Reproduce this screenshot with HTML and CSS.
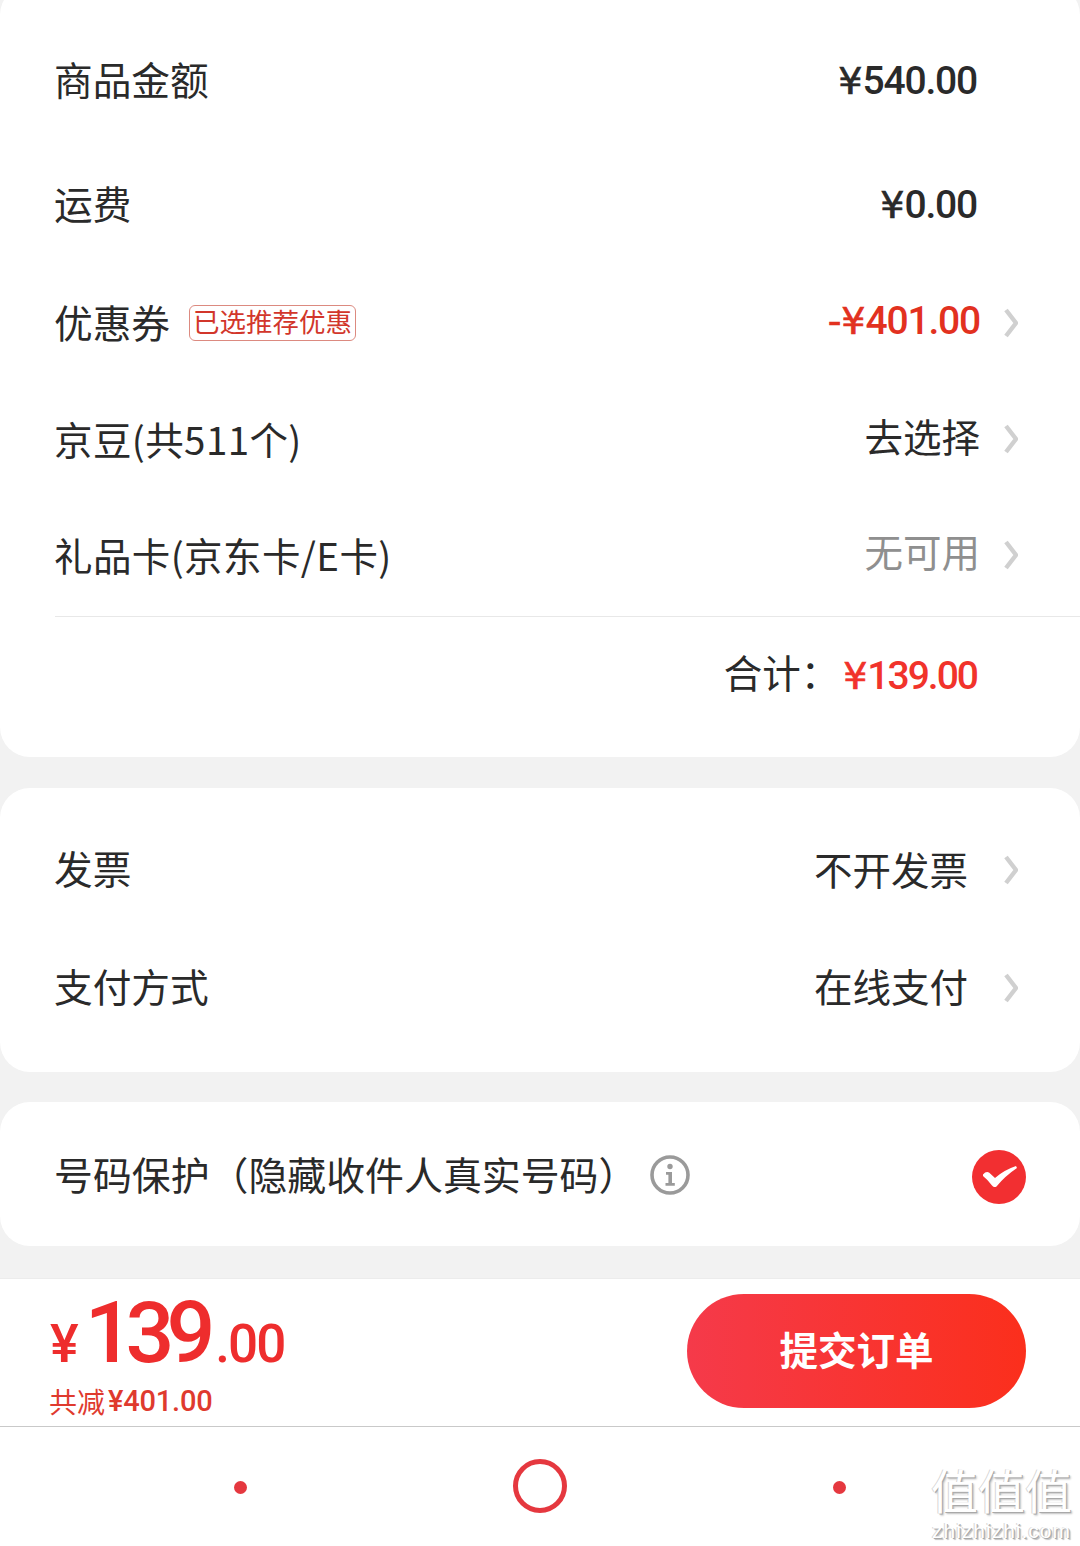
FILE: index.html
```html
<!DOCTYPE html>
<html lang="zh-CN">
<head>
<meta charset="utf-8">
<title>订单</title>
<link rel="stylesheet" href="styles.css">
</head>
<body>
<main class="page">
  <section class="card card-price">
    <div class="row row-first"><span class="label">商品金额</span><span class="num end-pad"><span class="cur">¥</span>540.00</span></div>
    <div class="row row-second"><span class="label">运费</span><span class="num end-pad"><span class="cur">¥</span>0.00</span></div>
    <div class="row"><span class="label label-mid">优惠券</span><span class="tag">已选推荐优惠</span><span class="num red-dark push"><span class="cur">-¥</span>401.00</span><svg class="chev" viewBox="0 0 14 30"><path d="M2 2 L12 15 L2 28"/></svg></div>
    <div class="row row-low"><span class="label label-low">京豆(共511个)</span><span class="value value-a push">去选择</span><svg class="chev" viewBox="0 0 14 30"><path d="M2 2 L12 15 L2 28"/></svg></div>
    <div class="row row-low"><span class="label label-low">礼品卡(京东卡/E卡)</span><span class="value value-b muted push">无可用</span><svg class="chev" viewBox="0 0 14 30"><path d="M2 2 L12 15 L2 28"/></svg></div>
    <div class="divider"></div>
    <div class="total"><span class="value value-c">合计：</span><span class="num red"><span class="cur">¥</span>139.00</span></div>
  </section>

  <section class="card card-pay">
    <div class="row row-pay"><span class="label">发票</span><span class="value value-a push">不开发票</span><svg class="chev chev-wide" viewBox="0 0 14 30"><path d="M2 2 L12 15 L2 28"/></svg></div>
    <div class="row row-pay"><span class="label">支付方式</span><span class="value value-b push">在线支付</span><svg class="chev chev-wide" viewBox="0 0 14 30"><path d="M2 2 L12 15 L2 28"/></svg></div>
  </section>

  <section class="card card-protect">
    <span class="label label-long">号码保护（隐藏收件人真实号码）</span>
    <svg class="info" viewBox="0 0 40 40"><circle cx="20" cy="20" r="18" fill="none" stroke="#9a9a9a" stroke-width="3.6"/><circle cx="20" cy="11.5" r="2.7" fill="#9a9a9a"/><path d="M16 17 H22 V28 H24.800 V30.800 H15.500 V28 H18.400 V19.800 H16 Z" fill="#9a9a9a"/></svg>
    <svg class="check" viewBox="0 0 54 54"><circle cx="27" cy="27" r="27" fill="#f22f31"/><path d="M11 24.500 Q14 21 17 22.500 L23 28 Q32 20 44 16 L45 18 Q33 26 24.500 36.500 Q22 38 20 35.500 Q16 30 11 26 Z" fill="#fff"/></svg>
  </section>

  <section class="bar">
    <div class="sum">
      <div class="amount"><span class="yen">¥</span><span class="big">139</span><span class="cents">.00</span></div>
      <div class="saved"><span class="saved-label">共减</span><span class="saved-num">¥401.00</span></div>
    </div>
    <button class="submit">提交订单</button>
  </section>

  <nav class="nav">
    <span class="dot"></span>
    <span class="ring"></span>
    <span class="dot"></span>
    <div class="mark"><div class="mark-cn">值值值</div><div class="mark-en">zhizhizhi.com</div></div>
  </nav>
</main>
</body>
</html>
```

FILE: styles.css
```css
* { box-sizing: border-box; }
html, body { margin: 0; padding: 0; }
body {
  width: 1080px;
  height: 1546px;
  overflow: hidden;
  background: #f2f2f2;
  font-family: "Noto Sans CJK SC", "Noto Sans", sans-serif;
  color: #2a2a2a;
}
.page { display: flex; flex-direction: column; height: 1546px; }
.card { background: #fff; border-radius: 30px; flex: none; }

.card-price { height: 772px; margin-top: -15px; padding: 38px 0 0 55px; }
.card-pay { height: 284px; margin-top: 31px; padding: 23px 0 0 55px; }
.card-protect {
  height: 144px;
  margin-top: 30px;
  padding: 0 54px 0 55px;
  display: flex;
  align-items: center;
}

.row { display: flex; align-items: center; height: 116px; padding-right: 62px; }
.row-second { margin-top: 8px; }
.row-pay { height: 118px; }
.label { font-size: 38.7px; line-height: 50px; white-space: nowrap; padding-bottom: 6px; margin-left: -1px; }
.label-mid { padding-bottom: 0; }
.label-low { padding: 2px 0 0; letter-spacing: 0.4px; font-size: 38.5px; }
.label-long { font-size: 38.9px; padding-bottom: 2px; }
.value { font-size: 38.5px; line-height: 50px; white-space: nowrap; }
.value-a { padding-bottom: 4px; }
.value-b { padding-bottom: 6px; }
.value-c { padding-bottom: 10px; margin-right: 4px; }
.muted { color: #8f8f8f; }
.push { margin-left: auto; }
.num {
  font-family: Roboto, "Liberation Sans", sans-serif;
  font-weight: 500;
  font-size: 39px;
  letter-spacing: -1.2px;
  line-height: 50px;
  white-space: nowrap;
}
.cur {
  font-family: "DejaVu Sans", sans-serif;
  font-weight: 400;
  font-size: 38px;
  letter-spacing: 0;
  -webkit-text-stroke: 0.7px currentColor;
}
.row-first .num, .row-second .num { margin-left: auto; }
.end-pad { margin-right: 41px; }
.red { color: #f1332b; letter-spacing: -2px; }
.red-dark { color: #e2311f; }

.tag {
  margin: 3px 0 0 19px;
  height: 36px;
  padding: 0 3px;
  border: 1px solid #dc8a80;
  border-radius: 6px;
  color: #d2362b;
  font-size: 26.500px;
  line-height: 30px;
  white-space: nowrap;
}
.chev { width: 14px; height: 30px; margin: 4px 0 0 24px; flex: none; }
.chev path { fill: none; stroke: #d0d0d0; stroke-width: 4.400; }
.chev-wide { margin: 0 0 0 36px; }

.divider { height: 1px; margin-top: 5px; background: #e8e8e8; }
.total {
  display: flex;
  justify-content: flex-end;
  align-items: center;
  height: 117px;
  padding-right: 103px;
}

.info { width: 40px; height: 40px; margin: 2px 0 0 13px; flex: none; }
.check { width: 54px; height: 54px; margin: 5px 0 0 auto; flex: none; }

.bar {
  height: 149px;
  margin-top: 32px;
  background: #fff;
  border-top: 1px solid #ececec;
  border-bottom: 1px solid #c9c9c9;
  display: flex;
  align-items: flex-start;
  justify-content: space-between;
  padding: 14px 54px 0 50px;
  flex: none;
}
.sum { display: flex; flex-direction: column; }
.amount {
  display: flex;
  align-items: baseline;
  height: 80px;
  color: #ee2d2d;
  font-family: Roboto, "Liberation Sans", sans-serif;
  font-weight: 500;
  white-space: nowrap;
}
.yen { font-size: 54px; line-height: 80px; }
.big { font-size: 86px; line-height: 80px; letter-spacing: -8px; margin-left: 6px; }
.cents { font-size: 53px; line-height: 80px; letter-spacing: -2px; margin-left: 8px; }
.saved { margin-top: 10px; display: flex; align-items: center; color: #df3a2e; height: 36px; white-space: nowrap; }
.saved-label { font-size: 28px; line-height: 36px; margin-left: -1px; }
.saved-num { font-family: Roboto, "Liberation Sans", sans-serif; font-weight: 500; font-size: 29px; letter-spacing: -0.200px; line-height: 36px; margin-left: 3px; }
.submit {
  width: 339px;
  height: 114px;
  margin-top: 1px;
  border: 0;
  border-radius: 57px;
  background: linear-gradient(90deg, #f53a4a, #fb2f1c);
  color: #fff;
  font-family: inherit;
  font-size: 38.500px;
  font-weight: 700;
  padding: 0 0 6px;
}

.nav {
  position: relative;
  flex: 1;
  background: #fff;
  display: flex;
  align-items: center;
  justify-content: center;
  gap: 266px;
  padding-bottom: 2px;
}
.dot { width: 13px; height: 13px; margin-top: 3px; border-radius: 50%; background: #e5383f; }
.ring { width: 54px; height: 54px; border-radius: 50%; border: 5px solid #e5383f; }
.mark {
  position: absolute;
  right: 8px;
  top: 39px;
  text-align: center;
  color: #fff;
}
.mark-cn {
  font-family: "Liberation Sans", "Noto Sans CJK SC", sans-serif;
  font-size: 47px;
  line-height: 53px;
  text-shadow: 1px 1px 0 #a9a9a9, -1px 0 0 #d5d5d5, 2px 2px 2px #c0c0c0;
}
.mark-en {
  font-family: "Liberation Sans", sans-serif;
  font-size: 21px;
  letter-spacing: 1px;
  line-height: 24px;
  text-shadow: 1px 1px 0 #a9a9a9, -1px 0 0 #d5d5d5, 2px 2px 1px #c0c0c0;
}
```
